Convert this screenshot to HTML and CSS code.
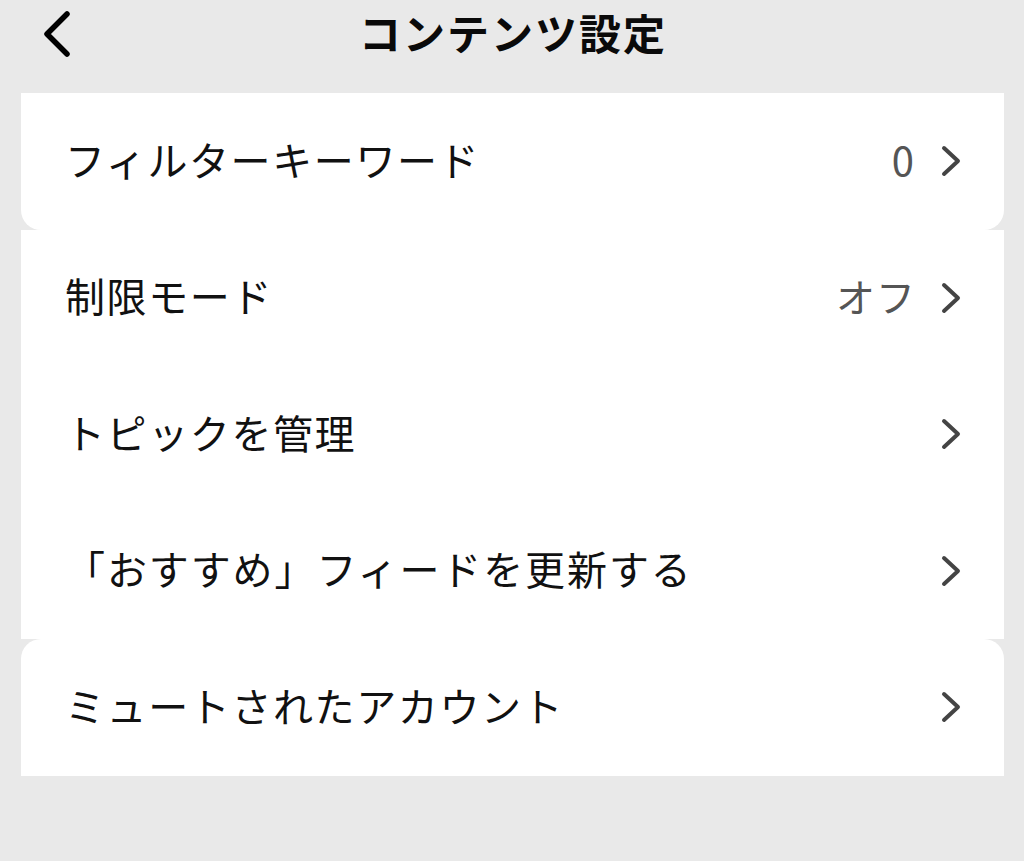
FILE: index.html
```html
<!DOCTYPE html>
<html lang="ja">
<head>
<meta charset="utf-8">
<title>コンテンツ設定</title>
<link rel="stylesheet" href="styles.css">
</head>
<body>
<header class="topbar">
  <div class="back">
    <svg class="back-icon" viewBox="0 0 28 46" width="28" height="46">
      <path d="M24 3 L4 23 L24 43" fill="none" stroke="#000" stroke-width="5.5" stroke-linecap="round" stroke-linejoin="round"/>
    </svg>
  </div>
  <h1 class="title">コンテンツ設定</h1>
  <div></div>
</header>
<main class="list">
  <section class="card card-first">
    <div class="row">
      <span class="label">フィルターキーワード</span>
      <span class="value">0</span>
      <svg class="chev" viewBox="0 0 20 32" width="20" height="32"><path d="M3 3 L17 16 L3 29" fill="none" stroke="#444" stroke-width="4" stroke-linecap="round" stroke-linejoin="round"/></svg>
    </div>
  </section>
  <section class="card card-mid">
    <div class="row">
      <span class="label">制限モード</span>
      <span class="value value-off">オフ</span>
      <svg class="chev" viewBox="0 0 20 32" width="20" height="32"><path d="M3 3 L17 16 L3 29" fill="none" stroke="#444" stroke-width="4" stroke-linecap="round" stroke-linejoin="round"/></svg>
    </div>
    <div class="row">
      <span class="label">トピックを管理</span>
      <svg class="chev" viewBox="0 0 20 32" width="20" height="32"><path d="M3 3 L17 16 L3 29" fill="none" stroke="#444" stroke-width="4" stroke-linecap="round" stroke-linejoin="round"/></svg>
    </div>
    <div class="row">
      <span class="label label-quote">「おすすめ」フィードを更新する</span>
      <svg class="chev" viewBox="0 0 20 32" width="20" height="32"><path d="M3 3 L17 16 L3 29" fill="none" stroke="#444" stroke-width="4" stroke-linecap="round" stroke-linejoin="round"/></svg>
    </div>
  </section>
  <section class="card card-last">
    <div class="row">
      <span class="label">ミュートされたアカウント</span>
      <svg class="chev" viewBox="0 0 20 32" width="20" height="32"><path d="M3 3 L17 16 L3 29" fill="none" stroke="#444" stroke-width="4" stroke-linecap="round" stroke-linejoin="round"/></svg>
    </div>
  </section>
</main>
</body>
</html>
```

FILE: styles.css
```css
html, body {
  margin: 0;
  padding: 0;
}
body {
  background: #e9e9e9;
  width: 1024px;
  height: 861px;
  font-family: "Noto Sans CJK JP", "Noto Sans", sans-serif;
  color: #111;
  overflow: hidden;
}
.topbar {
  display: grid;
  grid-template-columns: 1fr auto 1fr;
  align-items: center;
  height: 66px;
  margin-bottom: 27px;
}
.back {
  padding-left: 43px;
  display: flex;
  align-items: center;
}
.back-icon {
  display: block;
  margin-top: 1px;
}
.title {
  margin: 0 0 3px 0;
  font-size: 42px;
  font-weight: 700;
  letter-spacing: 2px;
  line-height: 1;
  color: #0a0a0a;
  padding-left: 2px;
}
.list {
  margin: 0 20px 0 21px;
  display: flex;
  flex-direction: column;
}
.card {
  background: #fff;
}
.card-first {
  border-radius: 0 0 20px 20px;
}
.card-last {
  border-radius: 20px 20px 0 0;
}
.row {
  display: flex;
  align-items: center;
  height: 136.5px;
  padding: 0 43px 0 44px;
}
.label {
  flex: 1;
  font-size: 40px;
  letter-spacing: 1.6px;
  line-height: 1;
  color: #111;
  margin-bottom: 5px;
}
.label-quote {
  letter-spacing: 1.9px;
}
.value {
  font-size: 40px;
  letter-spacing: 2px;
  line-height: 1;
  color: #555;
  margin-right: 25px;
  margin-bottom: 5px;
}
.value-off {
  letter-spacing: 1px;
  font-size: 39px;
}
.chev {
  display: block;
  flex: none;
}
```
